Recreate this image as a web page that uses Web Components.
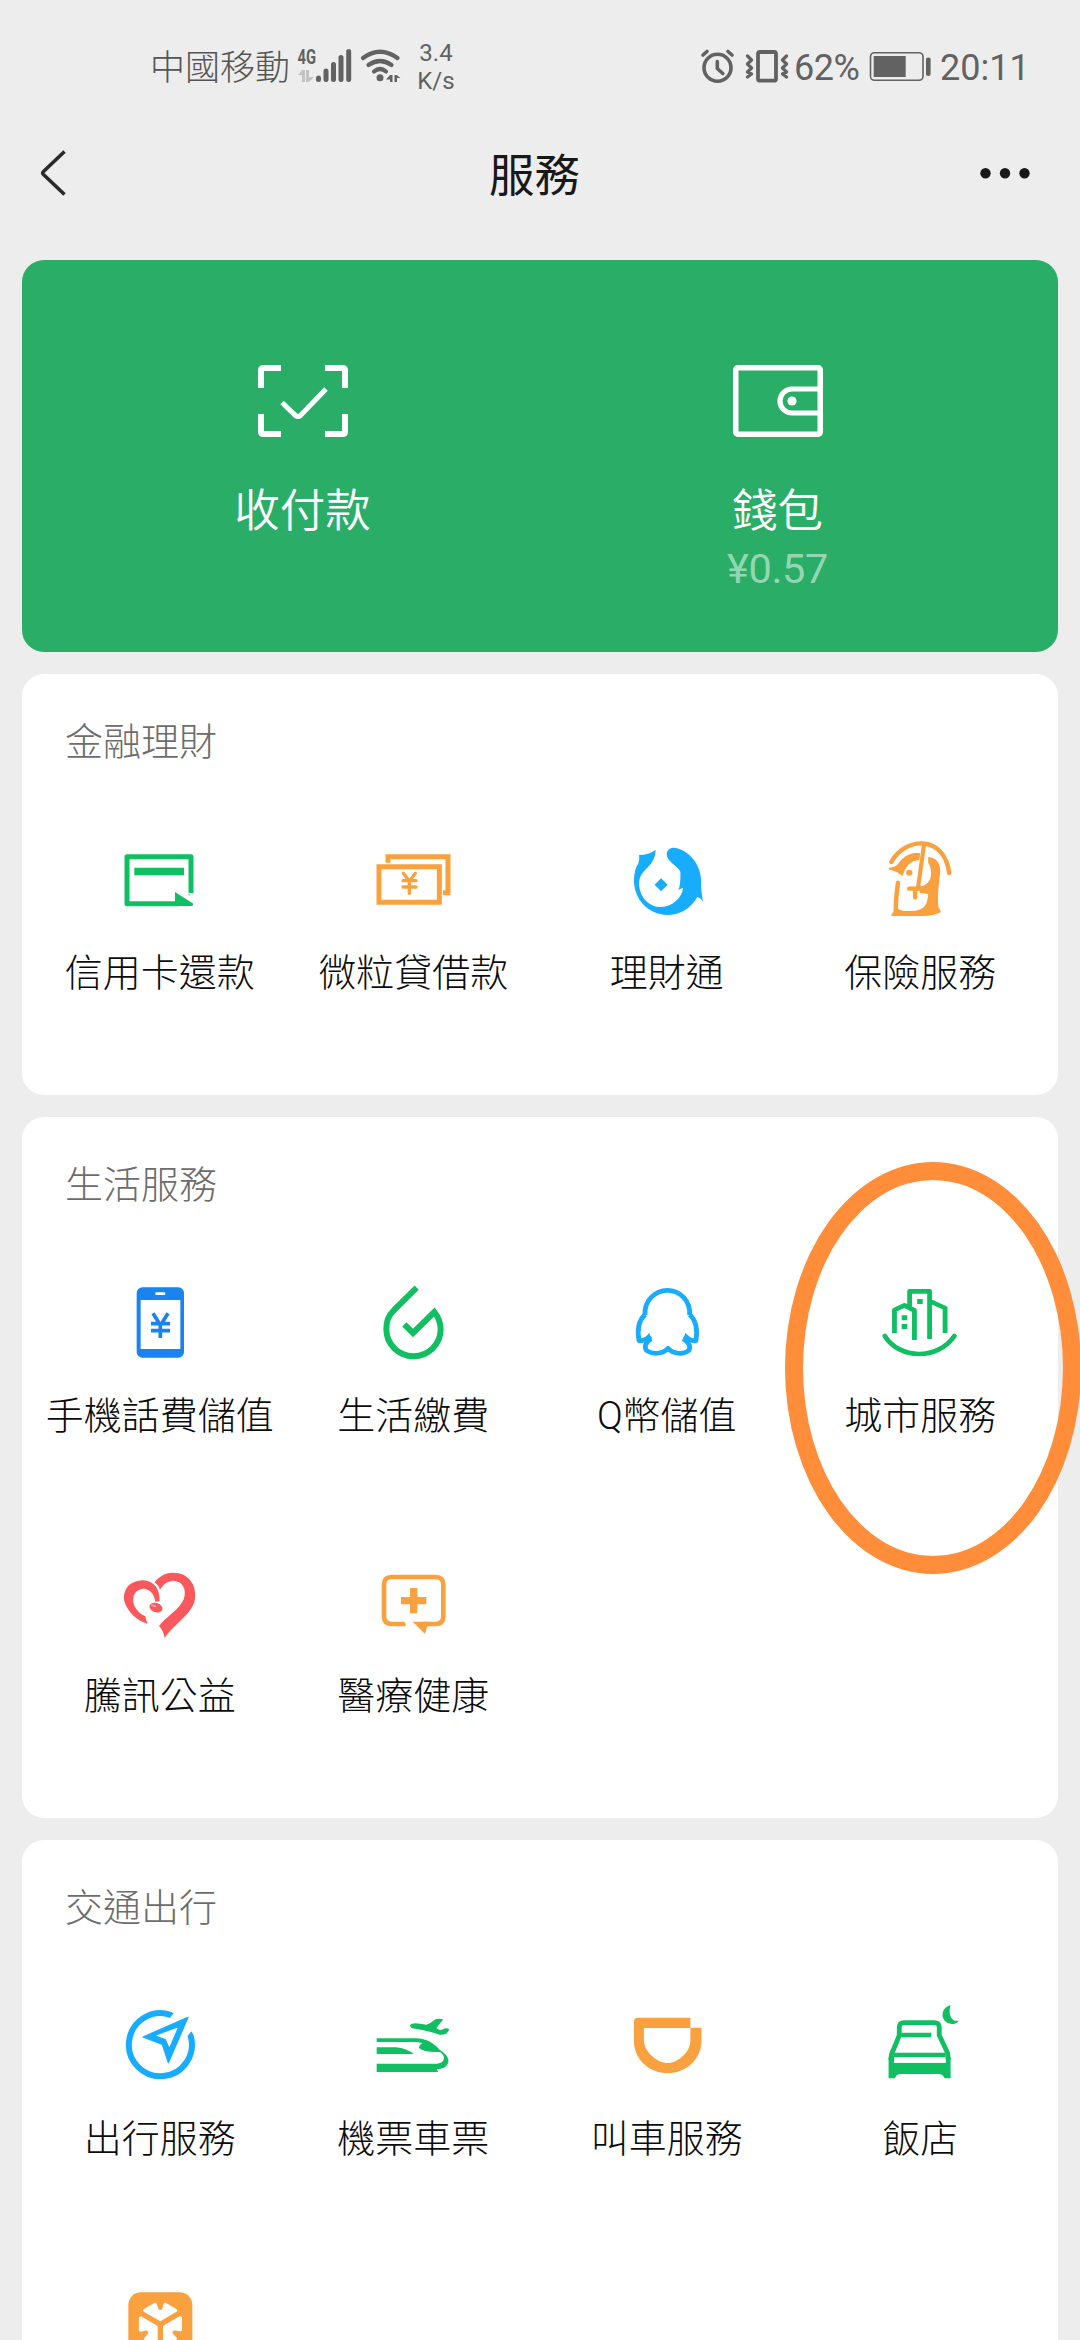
<!DOCTYPE html>
<html lang="zh-Hant">
<head>
<meta charset="utf-8">
<title>服務</title>
<style>
html,body{margin:0;padding:0}
body{width:1080px;height:2340px;overflow:hidden;background:#ededed;font-family:Roboto,"Noto Sans CJK TC",sans-serif}
</style>
</head>
<body>
<service-page></service-page>
<script>
const define = (name, html) => customElements.define(name, class extends HTMLElement {
  constructor() {
    super();
    this.attachShadow({ mode: 'open' }).innerHTML = html;
  }
});

const G = '#0fbf62', O = '#f9a03f', B = '#18acff';

/* Each entry: viewBox, drawing. */
const ICONS = {
  card: ['224 105 270 270', `<path d="M452 286V170H260V311H410" fill="none" stroke="${G}" stroke-width="15" stroke-linejoin="round"/><path d="M282 203h149v23H282zM404 276l55 35q0 7-7 7h-48z" fill="${G}"/><path d="M440 278l24 18v-16z" fill="#fff"/>`],
  loan: ['985 105 270 270', `<g fill="none" stroke="${O}" stroke-width="15"><path d="M1018 200h181v107h-181z"/><path d="M1045 188v-18h180v108h-15"/></g><g stroke="${O}" stroke-width="10" stroke-linecap="round" fill="none"><path d="M1091 220l18 24 18-24M1109 245v35M1090 242h39M1090 261h39"/></g>`],
  fund: ['237.4 105 261.3 270', `<path fill="${B}" d="M287 165Q315 165 335 149Q336 178 311 203C294 221 287 229 287 254C290 294 317 321 351 321C385 319 410 295 415 264Q407 265 401 270Q408 256 407 216C403 202 376 189 369 172C364 157 371 144 386 143C429 145 467 193 467 242Q466 270 473 307Q467 294 456 291C438 325 406 345 369 345C313 343 272 298 272 240Q273 208 285 190Q289 178 287 165z"/><path d="M351 235l19 19-19 20-19-20z" fill="${B}"/>`],
  insure: ['973.5 105 261.3 270', `<g fill="none" stroke="${O}" stroke-linecap="round"><path d="M1021 186C1058 113 1174 100 1189 219" stroke-width="13"/><path d="M1040 248C1038 275 1033 295 1034 331" stroke-width="13"/><path d="M1115 140L1098 267" stroke-width="12"/><path d="M1073 266h40M1090 267v25" stroke-width="13"/></g><path fill="${O}" d="M1014 203Q1034 204 1047 183C1064 163 1085 156 1105 160L1102 180C1077 181 1061 200 1054 228Q1035 213 1014 208zM1128 171C1151 172 1164 190 1163 215C1159 250 1154 291 1158 322L1165 335C1151 345 1131 348 1098 348H1020L1034 320C1046 335 1070 334 1090 332C1117 328 1126 315 1128 282L1104 279L1103 260C1126 256 1138 240 1136 216Q1136 199 1128 189z"/><circle cx="1073" cy="218" r="9" fill="${O}"/>`],
  phone: ['224 114 270 270', `<rect x="289" y="142" width="142" height="211" rx="17" fill="#1984ef"/><path d="M301 180h119v147H301z" fill="#fff"/><rect x="345" y="157" width="30" height="8" rx="2" fill="#fff"/><g fill="none" stroke="#1984ef" stroke-width="11"><path d="M338 220l18 29 4 4 5-4 18-29M360 248v46M332 251h57M332 272h57"/></g>`],
  drop: ['985 114 270 270', `<path fill="none" stroke="${G}" stroke-width="18" d="M1131 143L1065 208C1044 229 1040 244 1040 268A81 80 0 0 0 1203 268Q1203 240 1184 216L1120 279L1094 253"/>`],
  penguin: ['237.4 414 261.3 270', `<g fill="none" stroke="${B}" stroke-width="14" stroke-linejoin="round"><path d="M304 525C302 482 333 451 369 451C406 451 436 482 434 525"/><path d="M304 524C285 543 281 570 287 602L295 602Q312 597 319 588M434 524C454 543 457 570 452 602L443 602Q428 597 421 588"/><path d="M322 596C305 607 301 622 309 632C327 644 354 643 371 625C388 643 415 644 431 632C438 621 433 607 415 596"/></g><path fill="${B}" d="M316 578l9 22-22-2zM422 578l-9 22 22-2z"/>`],
  city: ['973.5 414 261.3 270', `<g fill="none" stroke="${G}" stroke-width="14" stroke-linejoin="round"><path d="M1030 580V510L1059 496L1088 511V600"/><path d="M1074 502V454H1132V597"/><path d="M1132 483L1177 504V579"/><path d="M1002 588C1045 659 1155 661 1204 588" stroke-linecap="round"/></g><path fill="${G}" d="M1096 477h16v15h-16zM1051 526h16v15h-16zM1051 552h16v15h-16z"/>`],
  heart: ['224 54 270 270', `<g fill="#f9595d"><path d="M322 251C294 246 260 215 252 184C246 146 271 122 307 121C342 122 359 148 358 184L345 185C341 159 325 144 303 147C282 152 273 174 282 197C290 213 302 224 315 229Q317 242 322 251z"/><path d="M343 127C362 102 388 94 414 100C451 107 471 143 463 182C453 223 401 252 373 294Q369 271 356 258C378 229 416 211 430 178C441 147 426 123 398 122C377 124 367 137 359 149Q355 136 343 127z"/><ellipse cx="347" cy="203" rx="20" ry="14" transform="rotate(18 347 203)"/></g><ellipse cx="340" cy="197" rx="8" ry="3" transform="rotate(15 340 197)" fill="#fcb0b2"/>`],
  health: ['985 54 270 270', `<path fill="none" stroke="${O}" stroke-width="14" d="M1098 252H1056Q1033 252 1033 229V134Q1033 111 1056 111H1188Q1211 111 1211 134V229Q1211 252 1188 252H1150"/><path fill="${O}" d="M1111 144h22v27h27v22h-27v27h-22v-27h-27v-22h27zM1119 245h48l-11 37z"/><path fill="#fff" d="M1088 240l24 24 7-18-5-6z"/>`],
  travel: ['224 93 270 270', `<path fill="none" stroke="${B}" stroke-width="18" d="M392.300 135.200A94.500 94.500 0 1 0 450.300 195.800"/><path fill="${B}" d="M391 126L400 130L389 143zM441.500 198L453 184L460 197z"/><path fill="${B}" stroke="${B}" stroke-width="4" stroke-linejoin="round" fill-rule="evenodd" d="M443 142L384 278L366 223L308 201zM416 169L341 197L375 209L387 237z"/>`],
  ticket: ['985 93 270 270', `<g fill="${G}"><path d="M1011 205H1128C1162 205 1182 220 1200 239C1218 250 1229 264 1226 277C1221 292 1207 298 1191 298L1196 306H1011V281H1192C1210 280 1219 266 1208 252C1202 244 1196 246 1181 246Q1149 244 1138 234Q1138 225 1149 219Q1135 216 1118 216H1011z"/><path d="M1011 232H1069Q1101 235 1123 252H1011z"/><path d="M1112 164Q1119 155 1160 164Q1174 160 1184 150Q1194 143 1211 148L1190 174Q1202 184 1210 178Q1219 172 1229 178Q1224 196 1201 194C1170 185 1145 179 1117 175Q1109 171 1112 164z"/></g>`],
  taxi: ['237.4 93 261.3 270', `<path fill="${O}" fill-rule="evenodd" d="M272 156Q272 143 284 143H436V173H468V212C468 267 425 309 370 309C315 309 272 267 272 212zM301 174V212C302 245 340 279 370 279C400 279 436 245 436 212V174z"/>`],
  hotel: ['973.5 93 261.3 270', `<g fill="none" stroke="${G}" stroke-width="14"><path d="M1044 200V172Q1044 158 1058 158H1145Q1160 158 1160 172V196L1182 244Q1186 252 1186 270M1044 196L1025 244Q1020 252 1020 270"/><path d="M1050 195H1137M1028 255H1178"/></g><path fill="${G}" d="M1013 262L1029 258V278H1179V258L1193 262V325H1176Q1170 312 1158 312H1048Q1036 312 1031 325H1013z"/><path fill="#fff" d="M1029 278Q1029 262 1047 262H1160Q1179 262 1179 278z"/><path fill="${G}" d="M1193 106C1161 113 1162 159 1196 162Q1210 162 1217 152Q1200 155 1193 140Q1187 124 1193 106z"/>`],
  parcel: ['344 123 270 270', `<rect x="384" y="157" width="192" height="192" rx="38" fill="${O}"/><g fill="#fff" stroke="#fff" stroke-width="10" stroke-linejoin="round"><path id="a" d="M433 211L464 193L471 212Q480 218 489 212L495 193L526 211L480 238z"/><use href="#a" transform="rotate(120 480 253)"/><use href="#a" transform="rotate(240 480 253)"/></g>`],
  scan: ['0 0 90 72', `<g fill="none" stroke="#fff" stroke-width="6"><path d="M23 3H5.500Q3 3 3 5.500V23M67 3H84.500Q87 3 87 5.500V23M3 49V66.500Q3 69 5.500 69H23M87 49V66.500Q87 69 84.500 69H67"/><path d="M24 37.500L37.500 50.500Q40 52.500 42.500 50.500L68 24" stroke-width="5"/></g>`],
  wallet: ['0 0 90 72', `<g fill="none" stroke="#fff"><rect x="2.750" y="2.750" width="84.500" height="66.500" rx="2" stroke-width="5.500"/><path d="M87 24H59A12 12 0 0 0 59 48H87" stroke-width="5.200"/></g><circle cx="59" cy="36" r="4.600" fill="#fff"/>`]
};

customElements.define('svc-icon', class extends HTMLElement {
  constructor() { super(); this.attachShadow({ mode: 'open' }); }
  connectedCallback() {
    const [box, body] = ICONS[this.getAttribute('name')];
    this.shadowRoot.innerHTML = `<style>:host{display:block;width:90px;height:90px}svg{display:block;width:100%;height:100%}</style><svg viewBox="${box}" preserveAspectRatio="none">${body}</svg>`;
  }
});

define('svc-tile', `<style>
:host{display:flex;flex-direction:column;align-items:center;gap:21px;height:260px;min-width:0}
.label{font-size:38px;line-height:54px;height:54px;font-weight:300;color:#0c0c0c;white-space:nowrap}
</style><slot name="icon"></slot><div class="label"><slot></slot></div>`);

define('svc-section', `<style>
:host{display:block;background:#fff;border-radius:22px;padding:41px 11px 0}
.title{font-size:38px;line-height:54px;font-weight:300;color:#6c6c6c;padding-left:32px;margin-bottom:66px}
.grid{display:grid;grid-template-columns:repeat(4,minmax(0,1fr));row-gap:20px}
</style><div class="title"><slot name="title"></slot></div><div class="grid"><slot></slot></div>`);

define('pay-entry', `<style>
:host{display:flex;flex:1;flex-direction:column;align-items:center;color:#fff}
::slotted(svc-icon){height:72px}
.name{font-size:45.500px;line-height:60px;margin-top:45px;font-weight:350}
.sum{font-size:41.500px;line-height:50px;margin-top:2px;color:#94d6b2;letter-spacing:-.3px}
</style><slot name="icon"></slot><div class="name"><slot></slot></div><div class="sum"><slot name="sum"></slot></div>`);

define('pay-panel', `<style>
:host{display:flex;box-sizing:border-box;height:392px;padding:105px 43px 0;background:#2aae67;border-radius:22px}
</style><slot></slot>`);

define('status-bar', `<style>
:host{display:flex;justify-content:space-between;align-items:flex-start;box-sizing:border-box;height:110px;padding:42px 52px 0 150px;color:#626262}
.group{display:flex;height:50px;align-items:center}
svg{display:block}
.carrier{font-size:35px;line-height:50px;font-weight:300;color:#555;width:142px;white-space:nowrap;padding-top:3px}
.speed{font-size:24px;line-height:28px;text-align:center;width:42px;margin-left:11px}
.num{font-size:36px;line-height:50px;white-space:nowrap;padding-top:2px}
.pct{width:71px;margin-left:3px;letter-spacing:-.5px}
.clock{width:88px}
</style>
<div class="group"><span class="carrier">中國移動</span>
<svg width="112" height="50" viewBox="292 42 112 50">
<text x="297.500" y="64" font-family="Roboto" font-weight="700" font-size="20.500" textLength="18.500" lengthAdjust="spacingAndGlyphs" fill="#626262">4G</text>
<path fill="#c2c2c2" d="M302 70h3v12h-3v-7h-4zM309 82h-3V70h3v7h5z"/>
<path stroke="#626262" stroke-width="5" stroke-linecap="round" d="M318.500 78v1.500M326 71v8.500M333.500 64.500v15M341 57.500v22M348.700 51.500v28"/>
<g fill="none" stroke="#626262" stroke-width="4.200" stroke-linecap="round"><path d="M363 58Q380 45.500 397.500 58M368.500 65Q380 57 391.500 65M374 71.500Q380 66.500 386 71.500"/></g>
<circle cx="380" cy="77.700" r="3.500" fill="#626262"/><path fill="#626262" d="M390 75h2.500v7h-2.500v-2.500h-4zM394.500 75h2l4 3h-3.500v4h-2.500z"/>
</svg><span class="speed">3.4<br>K/s</span></div>
<div class="group">
<svg width="92" height="50" viewBox="698 42 92 50" fill="none" stroke="#626262" stroke-linecap="round" stroke-linejoin="round">
<circle cx="716.500" cy="67.700" r="13.500" stroke-width="3.600"/><path stroke-width="3.600" d="M716.300 61.500v7l5.500 5M702 55l4-3.500M731 55l-4-3.500"/>
<rect x="757" y="52" width="18" height="28.700" rx="2" stroke-width="3.800"/>
<path stroke-width="3.200" d="M746.500 56l4 4-4 4 4 4-4 4 4 2-4 3M785.500 56l-4 4 4 4-4 4 4 4-4 2 4 3"/>
</svg><span class="num pct">62%</span>
<svg width="75" height="50" viewBox="864 42 75 50"><rect x="869.500" y="52.700" width="52.500" height="27.600" rx="4" fill="none" stroke="#626262" stroke-width="1.600"/><path fill="#626262" d="M872.700 56h32v21h-32z"/><rect x="925" y="57.500" width="4.600" height="18.500" rx="2" fill="#626262"/></svg>
<span class="num clock">20:11</span></div>`);

define('nav-bar', `<style>
:host{display:grid;grid-template-columns:120px 1fr 120px;align-items:center;height:130px;padding-bottom:20px}
h1{margin:0;padding:4px 11px 0 0;text-align:center;font-size:45.500px;line-height:60px;font-weight:400;color:#181818}
svg{display:block}
</style>
<svg width="120" height="60" viewBox="0 145 120 60"><path d="M64.500 151.500L43.500 171.500Q42 173 43.500 174.500L64.500 194.500" fill="none" stroke="#2a2a2a" stroke-width="3.600"/></svg>
<h1><slot></slot></h1>
<svg width="120" height="60" viewBox="960 145 120 60" fill="#181818"><circle cx="985.500" cy="173.300" r="5.200"/><circle cx="1005" cy="173.300" r="5.200"/><circle cx="1024.500" cy="173.300" r="5.200"/></svg>`);

const tile = (icon, label) => `<svc-tile><svc-icon slot="icon" name="${icon}"></svc-icon>${label}</svc-tile>`;

define('service-page', `<style>
:host{display:block;position:relative;width:1080px;height:2340px;overflow:hidden}
main{display:flex;flex-direction:column;gap:22px;padding:0 22px}
.ring{position:absolute;left:784.500px;top:1162px;width:296px;height:412px;box-sizing:border-box;border:18px solid #ff8d39;border-radius:50%}
</style>
<status-bar></status-bar>
<nav-bar>服務</nav-bar>
<main>
<pay-panel>
<pay-entry><svc-icon slot="icon" name="scan"></svc-icon>收付款</pay-entry>
<pay-entry><svc-icon slot="icon" name="wallet"></svc-icon>錢包<span slot="sum">¥0.57</span></pay-entry>
</pay-panel>
<svc-section><span slot="title">金融理財</span>${tile('card', '信用卡還款')}${tile('loan', '微粒貸借款')}${tile('fund', '理財通')}${tile('insure', '保險服務')}</svc-section>
<svc-section><span slot="title">生活服務</span>${tile('phone', '手機話費儲值')}${tile('drop', '生活繳費')}${tile('penguin', 'Q幣儲值')}${tile('city', '城市服務')}${tile('heart', '騰訊公益')}${tile('health', '醫療健康')}</svc-section>
<svc-section><span slot="title">交通出行</span>${tile('travel', '出行服務')}${tile('ticket', '機票車票')}${tile('taxi', '叫車服務')}${tile('hotel', '飯店')}${tile('parcel', '')}</svc-section>
</main>
<div class="ring"></div>`);
</script>
</body>
</html>
